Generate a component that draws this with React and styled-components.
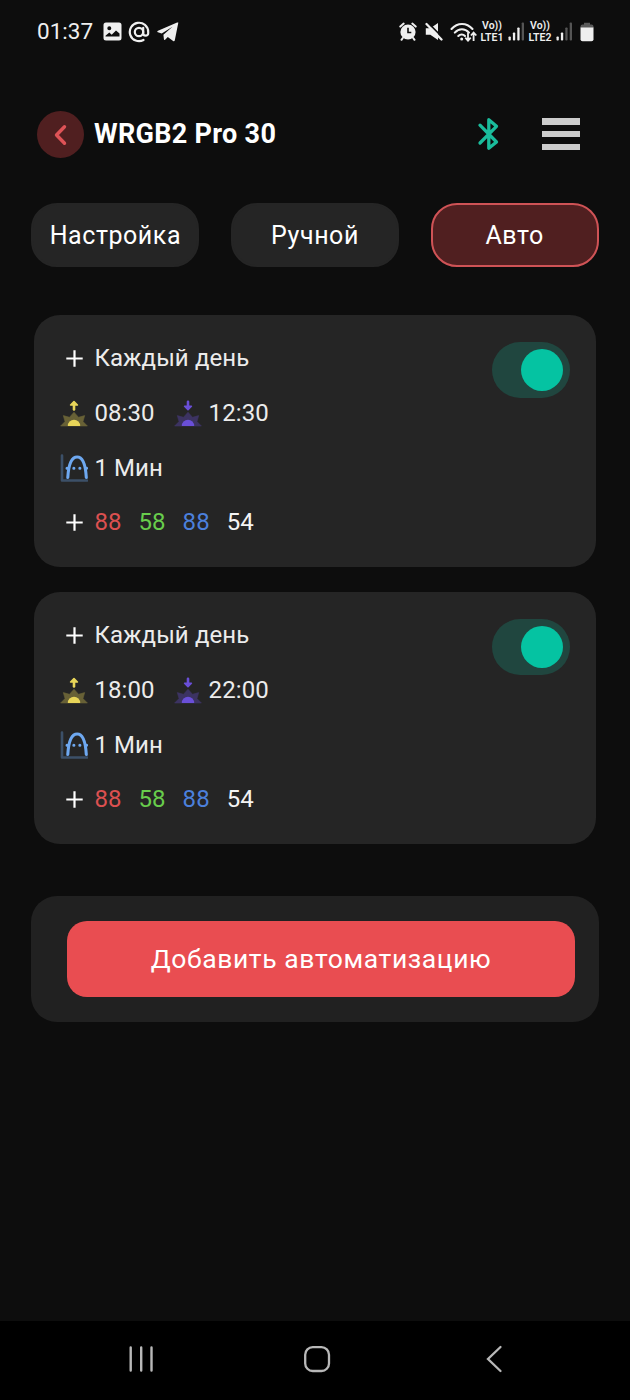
import React, { useState } from 'react'
import styled, { ThemeProvider, createGlobalStyle } from 'styled-components'

const theme = {
  colorBackground: '#0d0d0d',
  colorCard: '#252525',
  colorPanel: '#212121',
  colorRed: '#e94d51',
  colorRedDark: '#501f20',
  colorGreen: '#05c3a2',
  colorGreenDark: '#20463f',
  colorTextPrimary: '#ffffff',
  colorTextSecondary: '#ececec',
}

const GlobalStyle = createGlobalStyle`
  * {
    box-sizing: border-box;
  }

  body {
    margin: 0;
    background: #0d0d0d;
  }

  button {
    padding: 0;
    border: 0;
    background: none;
    color: inherit;
    font: inherit;
    letter-spacing: inherit;
    cursor: pointer;
  }

  svg {
    display: block;
    flex: none;
  }
`

const Screen = styled.div`
  display: flex;
  flex-direction: column;
  width: 630px;
  height: 1400px;
  overflow: hidden;
  background: ${props => props.theme.colorBackground};
  color: ${props => props.theme.colorTextPrimary};
  font-family: Roboto, 'Liberation Sans', sans-serif;
`

const StatusBar = styled.div`
  display: flex;
  align-items: center;
  justify-content: space-between;
  height: 63px;
  padding: 0 36px 0 37px;
  color: #efefef;
`

const StatusGroup = styled.div`
  display: flex;
  align-items: center;
  gap: ${props => props.$gap}px;
`

const Clock = styled.span`
  width: 59px;
  padding-bottom: 1px;
  font-size: 22.5px;
  line-height: 26px;
`

const Volte = styled.div`
  display: flex;
  flex-direction: column;
  align-items: center;
  width: 24px;
  margin: 0 -3px 0 -4px;
  font-size: 10.5px;
  font-weight: 600;
  line-height: 11.5px;
  white-space: nowrap;
`

const Header = styled.header`
  display: flex;
  align-items: center;
  height: 47px;
  margin-top: 48px;
  padding: 0 50px 0 37px;
`

const BackButton = styled.button`
  display: flex;
  align-items: center;
  justify-content: center;
  width: 47px;
  height: 47px;
  border-radius: 50%;
  background: ${props => props.theme.colorRedDark};
`

const Title = styled.h1`
  flex: 1;
  margin: 0 0 0 10px;
  padding-bottom: 2px;
  font-size: 27px;
  font-weight: 700;
  line-height: 32px;
  letter-spacing: 0.3px;
`

const HeaderActions = styled.div`
  display: flex;
  align-items: center;
  gap: 43px;
  padding-bottom: 1px;
`

const MenuButton = styled.button`
  display: flex;
  flex-direction: column;
  justify-content: space-between;
  width: 38px;
  height: 32px;
`

const MenuBar = styled.span`
  width: 100%;
  height: 6.5px;
  background: #cccccc;
`

const Tabs = styled.nav`
  display: flex;
  justify-content: space-between;
  margin-top: 45px;
  padding: 0 31.4px;
`

const Tab = styled.button`
  width: 168px;
  height: 64px;
  border-radius: 26px;
  border: 2px solid ${props => (props.$active ? '#cf5356' : props.theme.colorCard)};
  background: ${props => (props.$active ? props.theme.colorRedDark : props.theme.colorCard)};
  font-size: 25px;
  letter-spacing: 0.55px;
`

const CardList = styled.div`
  display: flex;
  flex-direction: column;
  gap: 25px;
  margin-top: 48px;
  padding: 0 34px 0 33.5px;
`

const Card = styled.section`
  display: flex;
  justify-content: space-between;
  align-items: flex-start;
  height: 252px;
  padding: 16px 26.5px 0;
  border-radius: 26px;
  background: ${props => props.theme.colorCard};
`

const Rows = styled.div`
  display: flex;
  flex-direction: column;
`

const Row = styled.div`
  display: flex;
  align-items: center;
  height: 54.7px;
  color: ${props => props.theme.colorTextSecondary};
  font-size: 24px;
  letter-spacing: 0.1px;
  white-space: nowrap;
`

const IconSlot = styled.span`
  display: flex;
  align-items: center;
  justify-content: center;
  width: 28px;
  margin-right: 6.4px;
`

const Time = styled.span`
  width: 79.8px;
`

const Channel = styled.span`
  width: 44.1px;
  color: ${props => props.$color};
`

const Switch = styled.button`
  display: flex;
  align-items: center;
  justify-content: ${props => (props.$on ? 'flex-end' : 'flex-start')};
  width: 77.5px;
  height: 55.5px;
  margin-top: 11px;
  padding: 0 6.5px;
  border-radius: 28px;
  background: ${props => (props.$on ? props.theme.colorGreenDark : '#3a3a3a')};
`

const Knob = styled.span`
  width: 42.5px;
  height: 42.5px;
  border-radius: 50%;
  background: ${props => (props.$on ? props.theme.colorGreen : '#8c8c8c')};
`

const Panel = styled.div`
  display: flex;
  height: 126px;
  margin: 52.4px 31.4px 0;
  padding: 25px 23.5px 25.5px 35.5px;
  border-radius: 26px;
  background: ${props => props.theme.colorPanel};
`

const AddButton = styled.button`
  flex: 1;
  padding-bottom: 1px;
  border-radius: 20px;
  background: ${props => props.theme.colorRed};
  font-size: 26.5px;
  letter-spacing: 0.6px;
`

const NavBar = styled.footer`
  display: flex;
  align-items: center;
  height: 79px;
  margin-top: auto;
  padding: 0 0 3px 128px;
  background: #000000;
`

const NavButton = styled.button`
  display: flex;
  margin-right: ${props => props.$spacing || 0}px;
`

const PhotoIcon = () => (
  <svg width="19" height="19" viewBox="0 0 19 19">
    <path
      fill="currentColor"
      fillRule="evenodd"
      d="M3 .5h13A2.500 2.500 0 0 1 18.500 3v13a2.500 2.500 0 0 1-2.500 2.500H3A2.500 2.500 0 0 1 .5 16V3A2.500 2.500 0 0 1 3 .5zM6.300 4.200a2 2 0 1 0 0 4 2 2 0 0 0 0-4zM2.500 14.500h14v-3L13 8.500l-4.300 4.300L6.300 10.500l-3.800 3.300z"
    />
  </svg>
)

const AtIcon = () => (
  <svg width="22" height="22" viewBox="0 0 22 22" fill="none" stroke="currentColor" strokeWidth="2.2">
    <circle cx="11" cy="11" r="4.2" />
    <path d="M15.200 6.800V12.200a2.500 2.500 0 0 0 5 0V11a9.200 9.200 0 1 0-4.700 8" strokeLinecap="round" />
  </svg>
)

const TelegramIcon = () => (
  <svg width="22" height="20" viewBox="0 0 22 20" fill="currentColor">
    <path d="M21.300.8 17.800 18.300c-.2 1-.9 1.200-1.700.7l-5.300-3.900-2.700 2.600c-.6.5-1.100.3-1.200-.6l-.5-4.300L15.500 4.700 4.700 11.400.9 10.200c-.9-.3-.9-.9.1-1.400L20.100.6c.8-.4 1.400-.2 1.200.2z" />
  </svg>
)

const AlarmIcon = () => (
  <svg width="18" height="19" viewBox="0 0 18 19">
    <circle cx="9" cy="10" r="7.6" fill="currentColor" />
    <path
      d="M1.300 4.600 4.700 1.600M16.700 4.600l-3.400-3M3.800 16l-1.300 1.800M14.200 16l1.300 1.800"
      stroke="currentColor"
      strokeWidth="2"
      strokeLinecap="round"
    />
    <path d="M9 5.700v4.800h3.300" stroke="#0d0d0d" strokeWidth="1.6" fill="none" />
  </svg>
)

const MuteIcon = () => (
  <svg width="19" height="19" viewBox="0 0 19 19">
    <path d="M1.800 6.200h4.500L14 .9v17L6.300 12.800H1.800z" fill="currentColor" />
    <path d="m3.800.7 15 15" stroke="#0d0d0d" strokeWidth="1.8" />
    <path d="m2.500 2 15 15.500" stroke="currentColor" strokeWidth="2.3" strokeLinecap="round" />
  </svg>
)

const WifiIcon = () => (
  <svg width="27" height="20" viewBox="0 0 27 20" fill="none" stroke="currentColor" strokeWidth="2.1">
    <path d="M1.500 7c6-6.700 15-6.700 21 0M4.800 10.600c4.200-4.500 10-4.500 14.200 0" strokeLinecap="round" />
    <path d="M8.300 14c2-2 4.900-2 6.700 0" strokeLinecap="round" />
    <circle cx="11.7" cy="17" r="1.5" fill="currentColor" stroke="none" />
    <path d="M18 10.500v8M15.300 15.700l2.700 3 2.700-3M23.600 19v-8M20.900 13.500l2.700-3 2.700 3" strokeWidth="1.8" />
  </svg>
)

const SignalIcon = ({ level }) => (
  <svg width="17" height="19" viewBox="0 0 17 19">
    {[4, 8, 13, 18].map((height, i) => (
      <rect
        key={height}
        x={0.5 + i * 4.4}
        y={18.5 - height}
        width="2.3"
        height={height}
        rx="0.8"
        fill={i < level ? '#efefef' : '#555555'}
      />
    ))}
  </svg>
)

const BatteryIcon = () => (
  <svg width="14" height="20" viewBox="0 0 14 20">
    <path d="M4 .8h6v1.700h1.500A2 2 0 0 1 13.500 4.500V6H.5V4.500a2 2 0 0 1 2-2H4z" fill="#5a5a5a" />
    <path d="M.5 5.500h13v11.800a2 2 0 0 1-2 2h-9a2 2 0 0 1-2-2z" fill="currentColor" />
  </svg>
)

const ChevronIcon = () => (
  <svg
    width="15"
    height="22"
    viewBox="0 0 15 22"
    fill="none"
    stroke="#df5357"
    strokeWidth="3.4"
    strokeLinecap="round"
    strokeLinejoin="round"
  >
    <path d="M11.500 2.700 3.500 11l8 8.300" />
  </svg>
)

const BluetoothIcon = () => (
  <svg
    width="22"
    height="34"
    viewBox="0 0 22 34"
    fill="none"
    stroke="#1abc9c"
    strokeWidth="3.3"
    strokeLinecap="round"
    strokeLinejoin="round"
  >
    <path d="M3 8.200 19.500 25l-7.700 6.300V2.700L19.500 9.300 3 26" />
  </svg>
)

const PlusIcon = () => (
  <svg width="17" height="17" viewBox="0 0 17 17" stroke="#ffffff" strokeWidth="2.2">
    <path d="M8.500.3v16.400M.3 8.500h16.400" />
  </svg>
)

// The arrow points up for sunrise and down for sunset
const SunIcon = ({ color, down }) => (
  <svg width="28" height="28" viewBox="0 -2 28 28">
    <path
      d="M.6 25 5 20.600 3.300 14.600 9.500 16.300 14 11.200l4.500 5.100 6.200-1.700-1.700 6L27.400 25z"
      fill={color}
      stroke={color}
      strokeWidth="0.6"
      strokeLinejoin="round"
      opacity="0.34"
    />
    <path d="M7.800 25a6.200 6.200 0 0 1 12.400 0z" fill={color} />
    <g transform={down ? 'rotate(180 14 4.6)' : undefined}>
      <path d="M14 8.500V3" stroke={color} strokeWidth="2.6" strokeLinecap="round" />
      <path d="M14 .6 17.400 4H10.600z" fill={color} stroke={color} strokeWidth="1.6" strokeLinejoin="round" />
    </g>
  </svg>
)

const CurveIcon = () => (
  <svg width="28" height="28" viewBox="0 0 28 28" fill="none" strokeLinecap="round" strokeLinejoin="round">
    <path d="M2 1.500v25h25" stroke="#3c5068" strokeWidth="2.6" />
    <path d="M7.800 23.500C8.600 9.500 11.800 3 17.200 3S25.500 9.500 26.300 23.500" stroke="#6ea8f0" strokeWidth="3.1" />
    <path d="M7 14.300h.1M13.800 14.300h.1M19.800 14.300h.1M26.500 14.300h.1" stroke="#6ea8f0" strokeWidth="3" />
  </svg>
)

const RecentsIcon = () => (
  <svg width="26" height="28" viewBox="0 0 26 28" stroke="#b8b8b8" strokeWidth="2.4" strokeLinecap="round">
    <path d="M2.700 2.500v23M13.200 2.500v23M23.500 2.500v23" />
  </svg>
)

const HomeIcon = () => (
  <svg width="28" height="28" viewBox="0 0 28 28" fill="none" stroke="#b8b8b8" strokeWidth="2.3">
    <rect x="2.2" y="2.2" width="23.8" height="23.8" rx="7.5" />
  </svg>
)

const NavBackIcon = () => (
  <svg width="18" height="28" viewBox="0 0 18 28" fill="none" stroke="#b8b8b8" strokeWidth="2.3" strokeLinecap="round">
    <path d="M15.500 2 3 14l12.500 12" />
  </svg>
)

const Schedule = ({ start, end }) => {
  const [on, setOn] = useState(true)

  return (
    <Card>
      <Rows>
        <Row>
          <IconSlot>
            <PlusIcon />
          </IconSlot>
          Каждый день
        </Row>
        <Row>
          <IconSlot>
            <SunIcon color="#e8d559" />
          </IconSlot>
          <Time>{start}</Time>
          <IconSlot>
            <SunIcon color="#6a4fd8" down />
          </IconSlot>
          <Time>{end}</Time>
        </Row>
        <Row>
          <IconSlot>
            <CurveIcon />
          </IconSlot>
          1 Мин
        </Row>
        <Row>
          <IconSlot>
            <PlusIcon />
          </IconSlot>
          <Channel $color="#dc5050">88</Channel>
          <Channel $color="#68cd4c">58</Channel>
          <Channel $color="#4c80dc">88</Channel>
          <Channel $color="#f4f4f4">54</Channel>
        </Row>
      </Rows>
      <Switch role="switch" aria-checked={on} $on={on} onClick={() => setOn(!on)}>
        <Knob $on={on} />
      </Switch>
    </Card>
  )
}

const tabs = ['Настройка', 'Ручной', 'Авто']

const schedules = [
  { start: '08:30', end: '12:30' },
  { start: '18:00', end: '22:00' },
]

const App = () => {
  const [tab, setTab] = useState('Авто')

  return (
    <ThemeProvider theme={theme}>
      <GlobalStyle />
      <Screen>
        <StatusBar>
          <StatusGroup $gap={6.5}>
            <Clock>01:37</Clock>
            <PhotoIcon />
            <AtIcon />
            <TelegramIcon />
          </StatusGroup>
          <StatusGroup $gap={7}>
            <AlarmIcon />
            <MuteIcon />
            <WifiIcon />
            <Volte>
              <span>Vo))</span>
              <span>LTE1</span>
            </Volte>
            <SignalIcon level={3} />
            <Volte>
              <span>Vo))</span>
              <span>LTE2</span>
            </Volte>
            <SignalIcon level={2} />
            <BatteryIcon />
          </StatusGroup>
        </StatusBar>
        <Header>
          <BackButton>
            <ChevronIcon />
          </BackButton>
          <Title>WRGB2 Pro 30</Title>
          <HeaderActions>
            <BluetoothIcon />
            <MenuButton>
              <MenuBar />
              <MenuBar />
              <MenuBar />
            </MenuButton>
          </HeaderActions>
        </Header>
        <Tabs>
          {tabs.map(name => (
            <Tab key={name} $active={name === tab} onClick={() => setTab(name)}>
              {name}
            </Tab>
          ))}
        </Tabs>
        <CardList>
          {schedules.map(schedule => (
            <Schedule key={schedule.start} {...schedule} />
          ))}
        </CardList>
        <Panel>
          <AddButton>Добавить автоматизацию</AddButton>
        </Panel>
        <NavBar>
          <NavButton $spacing={149}>
            <RecentsIcon />
          </NavButton>
          <NavButton $spacing={154}>
            <HomeIcon />
          </NavButton>
          <NavButton>
            <NavBackIcon />
          </NavButton>
        </NavBar>
      </Screen>
    </ThemeProvider>
  )
}

export default App
